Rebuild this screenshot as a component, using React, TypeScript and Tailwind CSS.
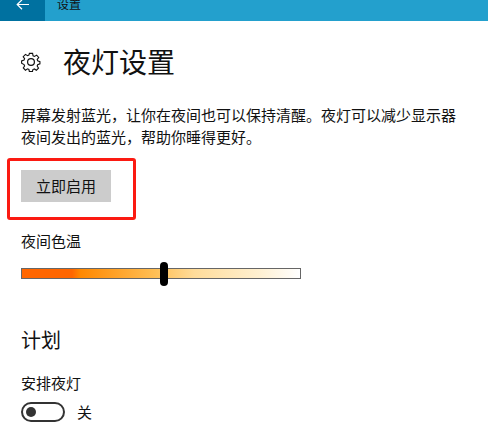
export default function App() {
  return (
    <div className="relative h-[437px] w-[488px] overflow-hidden bg-white text-[#111] font-['Noto_Sans_CJK_SC','Liberation_Sans',sans-serif]">
      {/* Title bar, cut off at the top */}
      <div className="flex h-[21px] bg-[#23a0cd]">
        <div className="flex h-[21px] w-[45px] items-start justify-center bg-[#0071a0]">
          <svg className="w-[14px] h-[14px] -mt-[1px] text-white" fill="none" stroke="currentColor" viewBox="0 0 14 14" strokeWidth={1.2}>
            <path d="M13 5.500H1.200M6 .8L1.200 5.500 6 10.200" />
          </svg>
        </div>
        <span className="ml-[12px] -mt-[2px] text-[12px] leading-[12px]">设置</span>
      </div>

      <div className="px-[21px]">
        {/* Page heading */}
        <div className="mt-[18px] flex h-[44px] items-center">
          <svg className="w-[20px] h-[20px] mt-[1px] text-[#111]" fill="none" stroke="currentColor" viewBox="0 0 20 20" strokeWidth={1.2}>
            <path d="M8.300 1h3.400l.5 2.600 1.500.7 2.300-1.400 2.200 2.500-1.600 2.100.5 1.500 2.400.8v2.400l-2.400.8-.5 1.500 1.400 2.200-2.300 2.300-2.100-1.400-1.600.7-.5 2.200H8.300l-.5-2.300-1.500-.7-2.200 1.400-2.300-2.300 1.400-2.200-.6-1.500L0 11.400V9l2.600-.8.6-1.500-1.500-2.100L4.100 2.100l2.200 1.400 1.500-.7z" transform="translate(.6 .4) scale(.94)" />
            <circle cx="10" cy="10" r="3.400" />
          </svg>
          <h1 className="ml-[22px] text-[28px] leading-[44px] font-normal">夜灯设置</h1>
        </div>

        <p className="mt-[21px] w-[440px] text-[15px] leading-[22px]">
          屏幕发射蓝光，让你在夜间也可以保持清醒。夜灯可以减少显示器夜间发出的蓝光，帮助你睡得更好。
        </p>

        <button className="mt-[22px] block h-[32px] w-[90px] bg-[#cccccc] text-[15px] leading-[32px]">立即启用</button>

        <div className="mt-[28px] text-[15px] leading-[22px]">夜间色温</div>

        {/* Colour temperature slider */}
        <div className="relative mt-[16px] h-[11px] w-[280px] border border-[#666] bg-[linear-gradient(to_right,#ff6600_0%,#ff6600_18%,#ff8800_21%,#ffbf55_48%,#ffdc9a_62%,#fff0d0_85%,#ffffff_100%)]">
          <div className="absolute left-[138px] top-[-7px] h-[24px] w-[8px] rounded-full bg-black" />
        </div>

        <h2 className="mt-[46px] text-[20px] leading-[30px] font-normal">计划</h2>

        <div className="mt-[17px] text-[15px] leading-[22px]">安排夜灯</div>

        {/* Toggle */}
        <div className="mt-[8px] flex items-center">
          <div className="flex h-[20px] w-[44px] items-center rounded-full border-2 border-[#333] px-[3px]">
            <div className="h-[10px] w-[10px] rounded-full bg-[#333]" />
          </div>
          <span className="ml-[12px] text-[15px] leading-[20px]">关</span>
        </div>
      </div>

      {/* Red annotation box over the button */}
      <div className="absolute left-[7px] top-[158px] h-[62px] w-[129px] rounded-[3px] border-[3px] border-[#fb1a12]" />
    </div>
  );
}
